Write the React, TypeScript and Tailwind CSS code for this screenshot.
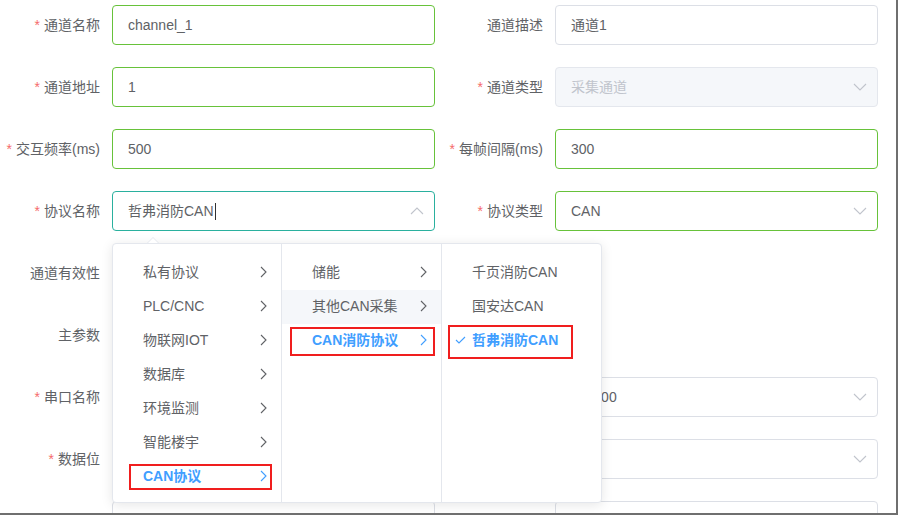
import React from "react";

type Tone = "ok" | "plain" | "focus" | "disabled";

interface FieldProps {
  label?: string;
  required?: boolean;
  value?: string;
  tone?: Tone;
  arrow?: "up" | "down";
  caret?: boolean;
  empty?: boolean;
  bare?: boolean;
}

const toneClass: Record<Tone, string> = {
  ok: "border-[#67c23a] bg-white text-[#606266]",
  plain: "border-[#dcdfe6] bg-white text-[#606266]",
  focus: "border-[#2ab09e] bg-white text-[#606266]",
  disabled: "border-[#e4e7ed] bg-[#f5f7fa] text-[#c0c4cc]",
};

const Chevron = ({ dir }: { dir: "up" | "down" }) => (
  <svg width="14" height="8" viewBox="0 0 14 8" fill="none" stroke="#c0c4cc" strokeWidth="1.1">
    {dir === "down" ? <path d="M1 1l6 6 6-6" /> : <path d="M1 7l6-6 6 6" />}
  </svg>
);

const ArrowRight = ({ active }: { active?: boolean }) => (
  <svg width="7" height="12" viewBox="0 0 7 12" fill="none" stroke={active ? "#409eff" : "#606266"} strokeWidth="1.1">
    <path d="M1 1l5 5-5 5" />
  </svg>
);

const Field: React.FC<FieldProps> = ({ label, required, value, tone = "plain", arrow, caret, empty, bare }) => {
  if (!label && !bare) return <div className="h-10" />;
  return (
    <div className="flex h-10 items-center">
      <label className="w-[112px] shrink-0 pr-3 text-right text-sm leading-10 text-[#606266]">
        {required && <span className="mr-1 text-[#f56c6c]">*</span>}
        {label}
      </label>
      {!empty && (
        <div className={`relative flex h-10 flex-1 items-center rounded-[4px] border px-[15px] text-sm ${toneClass[tone]}`}>
          <span>{value}</span>
          {caret && <span className="ml-px h-[17px] w-px bg-[#303133]" />}
          {arrow && (
            <span className="absolute right-[5px] top-0 flex h-full w-[25px] items-center justify-center">
              <Chevron dir={arrow} />
            </span>
          )}
        </div>
      )}
    </div>
  );
};

// rows 7-9 lie mostly under the cascader / below the fold, so only their boxes show
const rows: [FieldProps, FieldProps][] = [
  [
    { label: "通道名称", required: true, value: "channel_1", tone: "ok" },
    { label: "通道描述", value: "通道1" },
  ],
  [
    { label: "通道地址", required: true, value: "1", tone: "ok" },
    { label: "通道类型", required: true, value: "采集通道", tone: "disabled", arrow: "down" },
  ],
  [
    { label: "交互频率(ms)", required: true, value: "500", tone: "ok" },
    { label: "每帧间隔(ms)", required: true, value: "300", tone: "ok" },
  ],
  [
    { label: "协议名称", required: true, value: "哲弗消防CAN", tone: "focus", arrow: "up", caret: true },
    { label: "协议类型", required: true, value: "CAN", tone: "ok", arrow: "down" },
  ],
  [{ label: "通道有效性", empty: true }, {}],
  [{ label: "主参数", empty: true }, {}],
  [
    { label: "串口名称", required: true, arrow: "down" },
    { label: "波特率", required: true, value: "115200", arrow: "down" },
  ],
  [
    { label: "数据位", required: true, arrow: "down" },
    { label: "校验位", required: true, arrow: "down" },
  ],
  [{ bare: true }, { bare: true }],
];

interface MenuItem {
  text: string;
  sub?: boolean;
  active?: boolean;
  hover?: boolean;
  checked?: boolean;
}

const menus: { width: string; items: MenuItem[] }[] = [
  {
    width: "w-[169px] border-r",
    items: [
      { text: "私有协议", sub: true },
      { text: "PLC/CNC", sub: true },
      { text: "物联网IOT", sub: true },
      { text: "数据库", sub: true },
      { text: "环境监测", sub: true },
      { text: "智能楼宇", sub: true },
      { text: "CAN协议", sub: true, active: true },
    ],
  },
  {
    width: "w-[160px] border-r",
    items: [
      { text: "储能", sub: true },
      { text: "其他CAN采集", sub: true, hover: true },
      { text: "CAN消防协议", sub: true, active: true },
    ],
  },
  {
    width: "w-[159px]",
    items: [
      { text: "千页消防CAN" },
      { text: "国安达CAN" },
      { text: "哲弗消防CAN", active: true, checked: true },
    ],
  },
];

const Cascader = () => (
  <div className="absolute left-[112px] top-[243px] h-[260px] w-[490px]">
    {/* popper arrow */}
    <div className="absolute left-[35px] top-[-6px] h-0 w-0 border-x-[6px] border-b-[6px] border-x-transparent border-b-[#e4e7ed]" />
    <div className="absolute left-[36px] top-[-5px] h-0 w-0 border-x-[5px] border-b-[5px] border-x-transparent border-b-white" />
    <div className="flex h-full rounded-[4px] border border-[#e4e7ed] bg-white shadow-[0_2px_12px_0_rgba(0,0,0,0.1)]">
      {menus.map((menu, i) => (
        <ul key={i} className={`h-full border-[#e4e7ed] pt-3 ${menu.width}`}>
          {menu.items.map((item) => (
            <li
              key={item.text}
              className={`relative flex h-[34px] items-center pl-[30px] pr-[14px] pb-[2px] text-sm ${item.hover ? "bg-[#f5f7fa]" : ""} ${item.active ? "font-bold text-[#409eff]" : "text-[#606266]"}`}
            >
              {item.checked && (
                <svg className="absolute left-[13px]" width="11" height="8" viewBox="0 0 11 8" fill="none" stroke="#409eff" strokeWidth="1.1">
                  <path d="M1 4l3 3 6-6" />
                </svg>
              )}
              <span className="flex-1">{item.text}</span>
              {item.sub && <ArrowRight active={item.active} />}
            </li>
          ))}
        </ul>
      ))}
    </div>
  </div>
);

export default function App() {
  return (
    <div className="relative h-[515px] w-[898px] overflow-hidden border-b-2 border-r-2 border-[#6f6f6f] bg-white font-['Liberation_Sans','Noto_Sans_CJK_SC',sans-serif]">
      <div className="grid grid-cols-[435px_435px] gap-x-2 gap-y-[22px] pt-[5px]">
        {rows.map(([left, right], i) => (
          <React.Fragment key={i}>
            <Field {...left} />
            <Field {...right} />
          </React.Fragment>
        ))}
      </div>

      <Cascader />

      {/* red annotation boxes */}
      <div className="absolute left-[129px] top-[464px] h-[26px] w-[143px] border-2 border-[#f01e1e]" />
      <div className="absolute left-[290px] top-[327px] h-[29px] w-[145px] border-2 border-[#f01e1e]" />
      <div className="absolute left-[448px] top-[325px] h-[34px] w-[125px] border-2 border-[#f01e1e]" />
    </div>
  );
}
